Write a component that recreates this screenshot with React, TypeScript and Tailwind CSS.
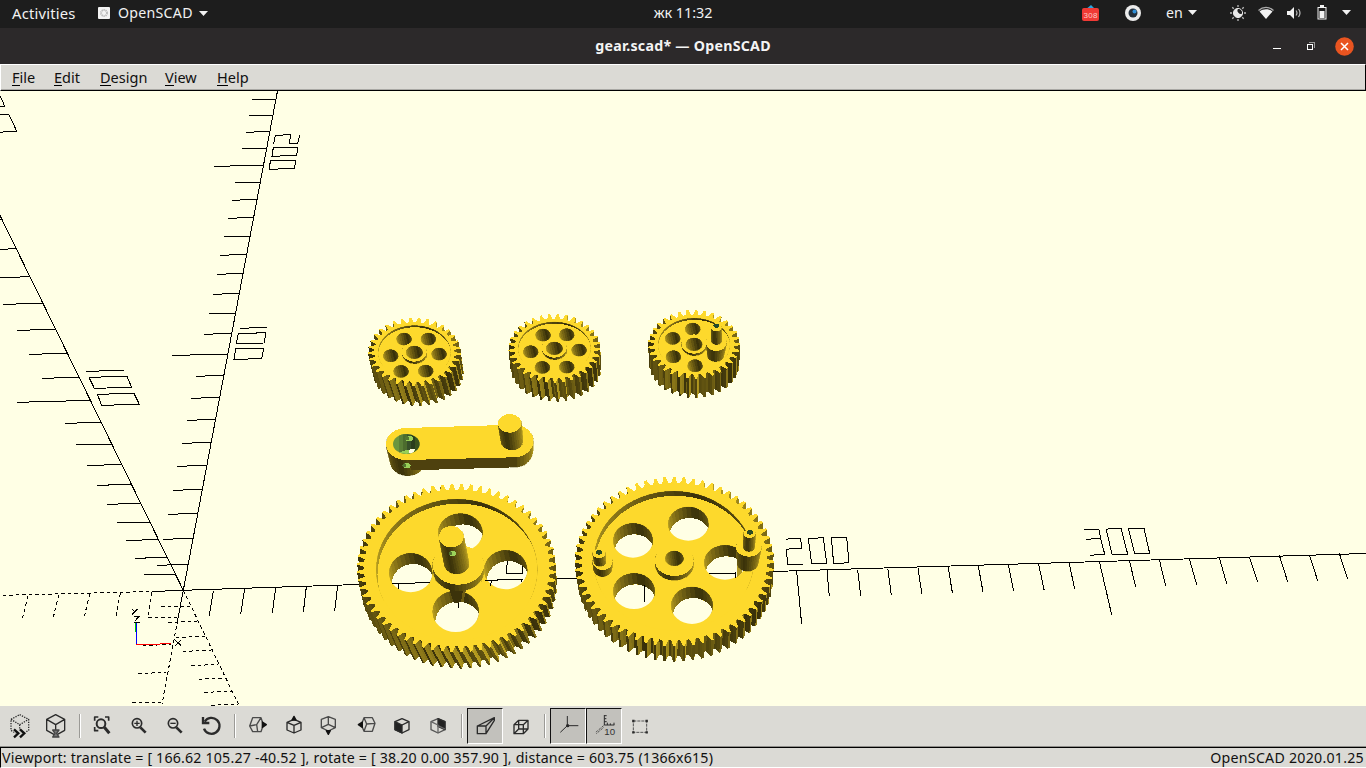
import type { ReactNode } from "react";

type P = [number, number];
type Ell = [number, number, number, number]; // cx, cy, rx, ry

const YELLOW = "#fdd92c";
const PAPER = "#ffffe5";
const TAU = Math.PI * 2;

/* ---------- shading and solids ---------- */

const DARK = (107.5 * Math.PI) / 180;
const brightness = (nx: number, ny: number) => {
  let d = Math.atan2(ny, nx) - DARK;
  while (d > Math.PI) d -= TAU;
  while (d < -Math.PI) d += TAU;
  return d < 0 ? Math.min(0.74, 0.22 + 0.28 * -d) : Math.min(0.6, 0.22 + 0.2 * d);
};

const shade = (b: number, c: P | number[] = [253, 217, 44]) =>
  `rgb(${Math.round(c[0] * b)},${Math.round(c[1] * b)},${Math.round(c[2] * b)})`;

const pts = (a: P[]) => a.map((p) => `${p[0].toFixed(2)},${p[1].toFixed(2)}`).join(" ");

/* converts values noted on a 3x grid with origin (ox, oy) */
const at = (ox: number, oy: number) => (e: Ell): Ell => [ox + e[0] / 3, oy + e[1] / 3, e[2] / 3, e[3] / 3];

const onEll = (e: Ell, a: number, r = 1): P => [e[0] + e[2] * r * Math.cos(a), e[1] + e[3] * r * Math.sin(a)];

function Wall({ top, bottom, n = 32, inside = false, tint }: { top: Ell; bottom: Ell; n?: number; inside?: boolean; tint?: number[] }) {
  const quads: { y: number; el: ReactNode }[] = [];
  for (let i = 0; i < n; i++) {
    const a = (i / n) * TAU;
    const b = ((i + 1) / n) * TAU;
    const m = (a + b) / 2;
    const s = inside ? -1 : 1;
    if (Math.sin(m) * s < -0.45) continue;
    const fill = shade(brightness(Math.cos(m) * s, Math.sin(m) * s), tint);
    quads.push({
      y: Math.sin(m) * s,
      el: (
        <polygon key={i} fill={fill} stroke={fill} strokeWidth=".3" points={pts([onEll(top, a), onEll(top, b), onEll(bottom, b), onEll(bottom, a)])} />
      ),
    });
  }
  quads.sort((p, q) => p.y - q.y);
  return <g>{quads.map((q) => q.el)}</g>;
}

const E = ({ e, fill }: { e: Ell; fill: string }) => <ellipse cx={e[0]} cy={e[1]} rx={e[2]} ry={e[3]} fill={fill} />;

function Cylinder({ top, bottom, n, cap = YELLOW }: { top: Ell; bottom: Ell; n?: number; cap?: string }) {
  return (
    <g>
      <Wall top={top} bottom={bottom} n={n} />
      <E e={top} fill={cap} />
    </g>
  );
}

/* Opening in a face; `floor` paints what is visible at the far end */
function Hole({ id, e, dx, dy, floor, tint, n = 30, taper = 0.98 }: { id: string; e: Ell; dx: number; dy: number; floor?: string; tint?: number[]; n?: number; taper?: number }) {
  const low: Ell = [e[0] + dx, e[1] + dy, e[2] * taper, e[3] * taper];
  return (
    <g>
      <clipPath id={id}>
        <ellipse cx={e[0]} cy={e[1]} rx={e[2]} ry={e[3]} />
      </clipPath>
      <g clipPath={`url(#${id})`}>
        <Wall top={e} bottom={low} inside n={n} tint={tint} />
        {floor && <E e={low} fill={floor} />}
      </g>
    </g>
  );
}

function GearBody({ top, bottom, teeth, root, twist, phase = 0 }: { top: Ell; bottom: Ell; teeth: number; root: number; twist: number; phase?: number }) {
  const prof: { a: number; r: number }[] = [];
  const step = TAU / teeth;
  for (let i = 0; i < teeth; i++) {
    const a = i * step + phase;
    prof.push({ a: a - step * 0.36, r: root });
    prof.push({ a: a - step * 0.22, r: root + (1 - root) * 0.45 });
    prof.push({ a: a - step * 0.12, r: 1 });
    prof.push({ a: a + step * 0.12, r: 1 });
    prof.push({ a: a + step * 0.22, r: root + (1 - root) * 0.45 });
    prof.push({ a: a + step * 0.36, r: root });
  }
  const quads = prof.map((p, i) => {
    const q = prof[(i + 1) % prof.length];
    const x1 = p.r * Math.cos(p.a);
    const y1 = p.r * Math.sin(p.a);
    const x2 = q.r * Math.cos(q.a);
    const y2 = q.r * Math.sin(q.a);
    const len = Math.hypot(x2 - x1, y2 - y1);
    const nx = (y2 - y1) / len;
    const ny = -(x2 - x1) / len;
    const fill = shade(brightness(nx, ny));
    return {
      y: (y1 + y2) / 2,
      el: (
        <polygon
          key={i}
          fill={fill}
          points={pts([onEll(top, p.a, p.r), onEll(top, q.a, q.r), onEll(bottom, q.a + twist, q.r), onEll(bottom, p.a + twist, p.r)])}
        />
      ),
    };
  });
  quads.sort((a, b) => a.y - b.y);
  return (
    <g>
      {quads.map((q) => q.el)}
      <polygon fill={YELLOW} points={pts(prof.map((p) => onEll(top, p.a, p.r)))} />
    </g>
  );
}

function SmallGear({ id, ox, oy, body, low, holes, hub, recess, phase, twist, hy = 13 }: { id: string; ox: number; oy: number; body: Ell; low: Ell; holes: P[]; hub: P; recess: Ell; phase: number; twist: number; hy?: number }) {
  const t = at(ox, oy);
  return (
    <g>
      <GearBody top={t(body)} bottom={t(low)} teeth={33} root={0.865} twist={twist} phase={phase} />
      <Hole id={id + "r"} e={t(recess)} dx={0.4} dy={2} floor={YELLOW} n={50} taper={1.005} />
      {holes.map((h, i) => (
        <Hole key={i} id={id + i} e={t([h[0], h[1], 23, 19])} dx={3} dy={hy} n={22} />
      ))}
      <Cylinder top={t([hub[0], hub[1] - 1, 37, 29])} bottom={t([hub[0] + 1, hub[1] + 5, 37, 29])} />
      <Hole id={id + "h"} e={t([hub[0], hub[1], 25, 20])} dx={3} dy={14} n={22} />
    </g>
  );
}

function Arm() {
  const t = at(350, 300);
  const L: Ell = t([168, 432, 60, 48]);
  const R: Ell = t([491, 423, 59, 49]);
  const outline: P[] = [];
  for (let i = 0; i <= 20; i++) outline.push(onEll(L, Math.PI / 2 + (i / 20) * Math.PI));
  for (let i = 0; i <= 20; i++) outline.push(onEll(R, -Math.PI / 2 + (i / 20) * Math.PI));
  return (
    <g>
      <Wall top={L} bottom={t([173, 488, 51, 39])} n={40} />
      <Wall top={R} bottom={t([492, 453, 57, 49])} n={36} />
      <polygon fill="#4e410e" points={pts([[408, 459], [516.5, 457], [516.5, 467.3], [411, 470.3]])} />
      <polygon fill={YELLOW} points={pts(outline)} />
      <clipPath id="armc">
        <ellipse cx={L[0] + 0.3} cy={L[1]} rx="13.300" ry="10" />
      </clipPath>
      <g clipPath="url(#armc)">
        <rect x="390" y="430" width="30" height="30" fill="#6b963f" />
        <rect x="399" y="430" width="4" height="30" fill="#5b8037" />
        <rect x="403" y="430" width="4" height="30" fill="#4c6c2e" />
        <rect x="407" y="430" width="4" height="30" fill="#37502a" />
        <rect x="411" y="430" width="4" height="30" fill="#2a3d1d" />
        <rect x="415" y="430" width="6" height="30" fill="#3a521f" />
        <path d="M399 453l4-2 6-1.500 6 .5-4 6H400z" fill="#98d058" />
        <path d="M408.500 451l2.500-2 4 0-1.500 3.500-3.500 1.500z" fill={PAPER} />
      </g>
      <E e={t([178, 416, 12, 8])} fill="#98d058" />
      <E e={t([171, 415, 6, 6])} fill="#54752f" />
      <E e={t([170, 497, 12, 8])} fill="#98d058" />
      <E e={t([163, 496, 6, 6])} fill="#54752f" />
      <Cylinder top={t([479, 370, 35, 28])} bottom={t([486, 423, 33, 27])} n={30} />
    </g>
  );
}

function WheelOne() {
  const t = at(350, 470);
  return (
    <g>
      <GearBody top={t([320, 294, 299, 253])} bottom={t([327, 348, 294, 248])} teeth={64} root={0.93} twist={-0.07} phase={0.05} />
      <Hole id="w1r" e={t([320, 299, 242, 212])} dx={1.8} dy={4.8} floor={YELLOW} n={60} taper={1.004} />
      {([[331, 187, 67, 57], [182, 308, 65, 59], [467, 299, 65, 59], [317, 424, 70, 62]] as Ell[]).map((h, i) => (
        <Hole key={i} id={"w1" + i} e={t(h)} dx={2.5} dy={10.700} floor={PAPER} />
      ))}
      <polygon fill="#3c330a" points={pts([[449, 588], [466, 588], [463.5, 602], [454, 603]])} />
      <polygon fill="#6d5c12" points={pts([[463, 590], [466, 590], [463.5, 602], [461, 602]])} />
      <Cylinder top={t([325, 285, 77, 59])} bottom={t([326, 304, 76, 59])} n={44} />
      <Cylinder top={t([304, 200, 37, 32])} bottom={t([320, 282, 37, 30])} n={34} />
      <E e={t([308, 251, 10, 8])} fill="#9bd25a" />
      <E e={t([301, 250, 5, 6])} fill="#54752f" />
    </g>
  );
}

function WheelTwo() {
  const t = at(565, 470);
  return (
    <g>
      <GearBody top={t([328, 275, 299, 254])} bottom={t([331, 327, 293, 248])} teeth={64} root={0.93} twist={0.012} />
      <Hole id="w2r" e={t([326, 272, 240, 209])} dx={1.2} dy={5} floor={YELLOW} n={60} taper={1.004} />
      {([[370, 161, 61, 51], [204, 211, 60, 52], [480, 277, 63, 52], [207, 363, 63, 54], [381, 406, 63, 56]] as Ell[]).map((h, i) => (
        <Hole key={i} id={"w2" + i} e={t(h)} dx={1.3} dy={11} floor={PAPER} />
      ))}
      <Cylinder top={t([328, 273, 58, 45])} bottom={t([328, 286, 57, 45])} n={40} />
      <Hole id="w2h" e={t([328, 265, 28, 23])} dx={2} dy={15} />
      <Cylinder top={t([113, 275, 30, 25])} bottom={t([113, 295, 28, 25])} />
      <Cylinder top={t([102, 250, 19, 14])} bottom={t([105, 276, 18, 13])} n={20} />
      <E e={t([102, 247, 9, 7])} fill="#2c4a24" />
      <polygon fill="#b39a23" points={pts([[736.5, 552], [742, 556], [742, 572], [737, 577.5]])} />
      <Cylinder top={t([551, 233, 38, 27])} bottom={t([548, 280, 31, 24])} n={34} />
      <Cylinder top={t([554, 191, 18, 13])} bottom={t([552, 232, 17, 13])} n={20} />
      <E e={t([555, 187, 9, 7])} fill="#2c4a24" />
    </g>
  );
}

/* ---------- axes ---------- */

type Seg = [number, number, number, number];
const path = (ox: number, oy: number, segs: Seg[]) =>
  segs.map(([a, b, c, d]) => `M${ox + a / 3} ${oy + b / 3}L${ox + c / 3} ${oy + d / 3}`).join("");
const poly = (ox: number, oy: number, p: P[], close = false) =>
  "M" + p.map(([x, y]) => `${ox + x / 3} ${oy + y / 3}`).join("L") + (close ? "Z" : "");

const midTicks: Seg[] = [1, 2, 3, 4, 5, 6].map((k) => [2573 + 90.4 * k, 1708.5 - 3 * k, 2582 + 91.7 * k, 1787 - 3 * k]);

const solid =
  "M152 591.5L183 590.3L358 584.5L575 578.5L773 571.5L867 568.5L1068 562.5L1366 553.5M183.300 590.300L277.500 91M183.300 590.300L0 215.500M183.300 590.300L177.700 620" +
  path(0, 0, [[829, 298, 757, 298], [820, 346, 747, 346], [810, 394, 739, 397], [800, 445, 727, 445], [790, 496, 643, 499], [781, 547, 706, 547], [771, 598, 697, 601], [760, 652, 685, 655], [750, 709, 673, 709]]) +
  path(0, 180, [[739, 223, 661, 226], [730, 280, 652, 283], [718, 340, 640, 343], [706, 400, 628, 400], [694, 460, 613, 463], [683, 523, 517, 526], [671, 586, 589, 589], [658, 652, 574, 655], [646, 718, 562, 721], [6, 118, 0, 118], [48, 206, 0, 208], [91, 290, 0, 293], [130, 370, 10, 373], [167, 448, 52, 451], [203, 520, 88, 523], [237, 592, 127, 595], [272, 661, 52, 667], [303, 727, 196, 730]]) +
  path(60, 415, [[152, 88, 48, 88], [184, 149, 82, 151], [214, 208, 112, 211], [242, 265, 142, 268], [270, 322, 172, 322], [295, 374, 198, 376], [321, 427, 225, 430], [345, 478, 253, 478], [454, 82, 367, 85], [440, 151, 352, 154], [427, 223, 340, 226], [413, 295, 325, 298], [398, 370, 310, 373], [383, 448, 292, 451]]) +
  path(0, 560, [[640, 92, 628, 167], [734, 86, 722, 163], [827, 83, 817, 160], [919, 80, 910, 157], [1013, 77, 1004, 154]]) +
  path(565, 470, [[695, 304, 710, 463], [786, 301, 793, 379], [878, 299, 887, 377]]) +
  path(0, 0, midTicks) +
  path(1050, 510, [[57, 158, 74, 236], [148, 154, 185, 314], [238, 151, 257, 230], [328, 149, 347, 227], [418, 147, 440, 224], [508, 143, 530, 221], [598, 140, 623, 217], [688, 136, 713, 215], [778, 134, 803, 212], [868, 130, 893, 208]]);

const figures =
  poly(0, 0, [[0, 287], [8, 303], [14, 319], [0, 319]]) +
  poly(0, 0, [[0, 343], [27, 344], [50, 393], [20, 394], [0, 398]]) +
  poly(0, 0, [[821, 432], [826, 406], [872, 404], [868, 430], [893, 431], [899, 405]]) +
  poly(0, 0, [[820, 442], [893, 443], [890, 466], [816, 469]], true) +
  poly(0, 0, [[811, 482], [887, 480], [884, 505], [808, 508]], true) +
  poly(0, 180, [[720, 445], [800, 442]]) +
  poly(0, 180, [[715, 461], [797, 458], [793, 489], [709, 490]], true) +
  poly(0, 180, [[707, 506], [791, 505], [785, 536], [702, 538]], true) +
  poly(0, 180, [[259, 574], [371, 571]]) +
  poly(0, 180, [[267, 592], [381, 589], [395, 622], [283, 625]], true) +
  poly(0, 180, [[292, 643], [402, 640], [418, 673], [305, 676]], true) +
  poly(565, 470, [[664, 208], [680, 205], [707, 206], [710, 235], [690, 235], [664, 238], [668, 283], [713, 283]]) +
  poly(565, 470, [[730, 206], [775, 203], [785, 280], [740, 281]], true) +
  poly(565, 470, [[799, 203], [845, 203], [852, 278], [806, 281]], true) +
  poly(1050, 510, [[103, 58], [147, 59], [152, 85], [109, 88]]) +
  poly(1050, 510, [[152, 85], [164, 132], [120, 136]]) +
  poly(1050, 510, [[169, 59], [181, 55], [213, 55], [233, 132], [186, 133]], true) +
  poly(1050, 510, [[235, 55], [282, 55], [299, 130], [254, 130]], true);

const dashed =
  "M3 595.300L152 591.500M177.700 620L162 704" +
  path(0, 560, [[550, 91, 715, 432], [84, 108, 67, 176], [176, 105, 160, 172], [269, 102, 253, 170], [361, 100, 348, 167], [455, 97, 443, 172], [445, 173, 530, 173], [428, 257, 512, 253], [415, 340, 497, 338], [397, 427, 484, 427], [484, 139, 570, 139], [505, 187, 590, 184], [528, 232, 615, 229], [549, 274, 634, 271], [574, 317, 655, 313], [596, 358, 675, 354], [613, 397, 695, 394], [634, 436, 715, 432]]);

const throughHoles =
  path(350, 470, [[126, 342, 240, 337], [145, 341, 145, 358], [405, 331, 520, 328], [425, 331, 421, 347], [516, 328, 515, 335], [327, 398, 325, 413]]) +
  poly(350, 470, [[472, 274], [469, 310], [517, 310], [517, 287]]) +
  path(565, 470, [[432, 310, 511, 310], [511, 306, 512, 323], [238, 345, 238, 395]]);

function Scene() {
  return (
    <svg className="block h-[615px] w-full bg-[#ffffe5]" viewBox="0 91 1366 615" shapeRendering="crispEdges">
      <g fill="none" stroke="#000">
        <path d={solid + figures} />
        <path d={dashed} strokeDasharray="3.500 3" />
        <path d="M135.500 623V632" stroke="#00c800" />
        <path d="M136.500 622V644.500" stroke="#0000ff" />
        <path d="M136.500 644.500L154 644.300L171 643.400" stroke="#ff0000" />
        <path d="M132 609L135 612M137.500 609L132 614.500M134 616.500H139.500M138.500 617L134.500 621.500M134 622.500H139.500M175.300 640.300L181 645.500M181 640.300L175.300 645.500" />
      </g>
      <SmallGear id="ga" ox={350} oy={300} body={[193, 156, 139, 103]} low={[205, 219, 136, 99]} hub={[193, 157]} holes={[[162, 117], [235, 117], [122, 167], [267, 162], [153, 214], [227, 213]]} recess={[193, 156, 109, 80]} phase={0.06} twist={-0.06} />
      <SmallGear id="gb" ox={350} oy={300} body={[613, 145, 138, 103]} low={[618, 206, 136, 99]} hub={[613, 145]} holes={[[579, 105], [650, 104], [542, 155], [687, 150], [577, 202], [650, 201]]} recess={[613, 144, 109, 79]} phase={0.03} twist={-0.025} />
      <SmallGear id="gc" ox={600} oy={300} body={[282, 133, 138, 103]} low={[283, 195, 135, 99]} hub={[282, 133]} holes={[[278, 87], [218, 115], [220, 170], [285, 197]]} recess={[282, 133, 108, 79]} phase={0.0} twist={0} />
      <Cylinder top={at(600, 300)([349, 128, 31, 25])} bottom={at(600, 300)([347, 168, 24, 17])} n={26} />
      <Cylinder top={at(600, 300)([349, 82, 16, 12])} bottom={at(600, 300)([350, 122, 16, 12])} n={20} />
      <E e={at(600, 300)([349, 77, 9, 6])} fill="#23492a" />
      <Arm />
      <WheelOne />
      <WheelTwo />
      <path d={throughHoles} fill="none" stroke="#000" />
    </svg>
  );
}

/* ---------- toolbar ---------- */

function Tool({ x, label, pressed, children }: { x: number; label: string; pressed?: boolean; children: ReactNode }) {
  return (
    <button
      aria-label={label}
      className={
        "h-9 w-9 shrink-0 " +
        (pressed ? "border border-t-[#111] border-l-[#111] border-r-white border-b-white bg-[#c2c1bc]" : "border border-transparent")
      }
    >
      <svg className="-m-px block h-9 w-9 max-w-none" viewBox={`${x * 3} 9 108 108`} fill="none" stroke="#2b2b2b" strokeWidth="4" strokeLinejoin="round">
        {children}
      </svg>
    </button>
  );
}

const Sep = ({ className }: { className: string }) => (
  <div className={"flex h-6 shrink-0 " + className}>
    <i className="h-6 w-px bg-[#9b9a96]" />
    <i className="h-6 w-px bg-white" />
  </div>
);

function Toolbar() {
  return (
    <div className="flex h-10 shrink-0 items-center bg-[#dbdad5] pl-0.5">
      <Tool x={2} label="Preview">
        <path d="M59 29L86 43V76L59 91L33 76V43ZM33 43L59 59L86 43M59 59V91" strokeDasharray="4 3.500" />
        <path d="M42 73L56 85L42 97M60 73L74 85L60 97" stroke="#dbdad5" strokeWidth="12" />
        <path d="M42 73L55 85L42 97M60 73L73 85L60 97" stroke="#111" strokeWidth="7" strokeLinejoin="miter" />
      </Tool>
      <Tool x={38} label="Render">
        <path d="M167 29L194 43V76L167 91L140 76V43ZM140 43L167 59L194 43M167 59V75" />
        <path d="M158 75H177L170 85L177 96H158L165 85Z" fill="#777" stroke="#444" strokeWidth="4" />
      </Tool>
      <Sep className="w-2.5 pl-[5px]" />
      <Tool x={84} label="View all">
        <path d="M284 47V36H295M315 36H326V47M284 66V77H295" strokeWidth="5" />
        <circle cx="303" cy="56" r="13" strokeWidth="6" />
        <path d="M313 67L328 85" strokeWidth="9" />
      </Tool>
      <Tool x={120} label="Zoom in">
        <circle cx="411" cy="55" r="14" strokeWidth="5" />
        <path d="M403 55H419M411 47V63" strokeWidth="4" />
        <path d="M421 67L437 83" strokeWidth="8" />
      </Tool>
      <Tool x={156} label="Zoom out">
        <circle cx="519" cy="55" r="14" strokeWidth="5" />
        <path d="M511 55H527" strokeWidth="4" />
        <path d="M529 67L545 83" strokeWidth="8" />
      </Tool>
      <Tool x={192} label="Reset view">
        <path d="M614 50A24 24 0 1 1 612 71" strokeWidth="7" />
        <path d="M609 36V54H628" strokeWidth="7" strokeLinejoin="miter" />
      </Tool>
      <Sep className="w-[11px] pl-1.5" />
      <Tool x={239} label="Right">
        <path d="M758 38H783L790 59L783 80H758L749 63ZM749 63L770 59L783 38M770 59L773 80" stroke="#4a4a4a" />
        <path d="M787 51L799 59L787 67Z" fill="#111" stroke="#111" />
      </Tool>
      <Tool x={275} label="Top">
        <path d="M882 43L903 52V75L882 84L861 75V52ZM861 52L882 61L903 52M882 61V84" />
        <path d="M882 34L888 45H876Z" fill="#111" stroke="#111" />
      </Tool>
      <Tool x={311} label="Bottom">
        <path d="M985 35L1006 43V68L985 78L964 68V43ZM985 35V58L964 68M985 58L1006 68" stroke="#4a4a4a" />
        <path d="M985 88L991 77H979Z" fill="#111" stroke="#111" />
      </Tool>
      <Tool x={347} label="Left">
        <path d="M1092 38H1117L1125 55L1117 79H1092L1084 59ZM1092 38L1100 57L1125 55M1100 57L1092 79" stroke="#4a4a4a" />
        <path d="M1087 51L1075 59L1087 67Z" fill="#111" stroke="#111" />
      </Tool>
      <Tool x={383} label="Front">
        <path d="M1206 41L1227 50V74L1206 84L1185 74V50Z" fill="#dbdad5" />
        <path d="M1185 50L1206 60V84L1185 74Z" fill="#222" />
        <path d="M1206 60L1227 50" />
      </Tool>
      <Tool x={419} label="Back">
        <path d="M1314 41L1335 50V74L1314 84L1293 74V50Z" fill="#dbdad5" stroke="#555" />
        <path d="M1314 41L1335 50V74L1314 64Z" fill="#222" />
        <path d="M1293 50L1314 60V84M1314 62L1335 72" stroke="#666" />
      </Tool>
      <Sep className="w-3 pl-[6px]" />
      <Tool x={467} label="Perspective" pressed>
        <path d="M1432 63H1458V86H1432ZM1432 63L1483 38V46L1458 86M1458 63L1483 38" strokeWidth="4" />
      </Tool>
      <Tool x={503} label="Orthogonal">
        <path d="M1542 59H1570V86H1542ZM1556 46H1584V72H1556ZM1542 59L1556 46M1570 59L1584 46M1542 86L1556 72M1570 86L1584 72" strokeWidth="4" />
      </Tool>
      <Sep className="w-[11px] pl-[5px]" />
      <Tool x={550} label="Show axes" pressed>
        <path d="M1702 33V62L1735 62M1702 62L1681 82" strokeWidth="3" />
        <circle cx="1703" cy="62" r="3" fill="#222" />
      </Tool>
      <Tool x={586} label="Show scale markers" pressed>
        <path d="M1813 30V60H1843M1813 32H1820M1813 41H1819M1813 50H1820M1822 60V53M1831 60V55M1842 60V53" strokeWidth="3" />
        <path d="M1813 60L1787 82M1810 68L1789 86" strokeWidth="3" strokeDasharray="3 3" />
        <text x="1813" y="89" fontSize="29" fontFamily="Liberation Sans" fill="#333" stroke="none">10</text>
      </Tool>
      <Tool x={622} label="Show edges">
        <path d="M1900 48H1940V82H1900Z" strokeWidth="3" stroke="#555" strokeDasharray="9 3" />
        <path d="M1900 48h.1M1940 48h.1M1900 82h.1M1940 82h.1" strokeWidth="7" strokeLinecap="square" />
      </Tool>
    </div>
  );
}

/* ---------- chrome ---------- */

const Caret = ({ className }: { className: string }) => (
  <svg className={"h-[5px] w-[9px] shrink-0 " + className} viewBox="0 0 9 5" fill="#f2f2f2">
    <path d="M0 0H9L4.500 5Z" />
  </svg>
);

function TopBar() {
  return (
    <div className="grid h-7 shrink-0 grid-cols-[1fr_auto_1fr] items-center bg-[#1d1d1d] pb-[2px] text-[14.200px] text-[#f2f2f2]">
      <div className="flex items-center pl-3">
        <span className="w-[86px] text-[14.800px] tracking-[0.2px]">Activities</span>
        <svg className="h-3 w-3" viewBox="0 0 12 12">
          <rect width="12" height="12" rx="1" fill="#f4f4f4" />
          <circle cx="6" cy="6" r="3" fill="none" stroke="#bdbdbd" strokeWidth="2" strokeDasharray="1.300 .6" />
        </svg>
        <span className="ml-[8px] w-[75px] tracking-[0.25px]">OpenSCAD</span>
        <Caret className="ml-[6px]" />
      </div>
      <span className="text-[14.400px] tracking-[-0.05px]">жк 11:32</span>
      <div className="flex items-center justify-end pr-[15px]">
        <svg className="h-4 w-[17px]" viewBox="0 0 17 16">
          <path d="M3 5L9 0L14 5Z" fill="#2aa5e0" />
          <rect y="3" width="17" height="13" rx="2" fill="#f03a35" />
          <text x="8.500" y="13" fontSize="8" textAnchor="middle" textLength="14" fontFamily="Liberation Sans" fill="#ffc9c4">308</text>
        </svg>
        <svg className="ml-[26px] h-4 w-4" viewBox="0 0 16 16">
          <circle cx="8" cy="8" r="8" fill="#ececec" />
          <circle cx="8" cy="8" r="4.500" fill="#24303c" />
          <circle cx="9.500" cy="6.500" r="2" fill="#2f8fd8" />
        </svg>
        <span className="ml-[25px] w-[17px]">en</span>
        <Caret className="ml-[5px]" />
        <svg className="ml-[33px] h-4 w-4" viewBox="0 0 16 16">
          <path d="M8 3.500a4.500 4.500 0 1 0 4.500 5A3.500 3.500 0 0 1 8 3.500Z" fill="#e8e8e8" />
          <circle cx="8" cy="8" r="4.600" fill="none" stroke="#e8e8e8" strokeWidth="1" />
          <path d="M8 0v2M8 14v2M0 8h2M14 8h2M2.300 2.300l1.400 1.400M12.300 12.300l1.400 1.400M13.700 2.300l-1.400 1.400M3.700 12.300l-1.400 1.400" stroke="#bbb" strokeWidth="1.300" />
        </svg>
        <svg className="ml-3 h-3.5 w-4" viewBox="0 0 16 14">
          <path d="M.5 4.500C5 .3 11 .3 15.500 4.500" fill="none" stroke="#aaa" strokeWidth="1.300" />
          <path d="M1.500 5.500C5 2.500 11 2.500 14.500 5.500L8 13Z" fill="#f2f2f2" />
        </svg>
        <svg className="ml-[13px] h-3 w-[15px]" viewBox="0 0 15 12">
          <path d="M0 4H3L7 0V12L3 8H0Z" fill="#f2f2f2" />
          <path d="M9 3.500Q11 6 9 8.500M11.500 2Q14.500 6 11.500 10" fill="none" stroke="#bbb" strokeWidth="1.200" />
        </svg>
        <svg className="ml-[15px] h-[15px] w-2.5" viewBox="0 0 10 15">
          <path d="M3 0H7V2H9.500V14.500H.5V2H3Z" fill="#f2f2f2" />
          <rect x="1.500" y="3" width="7" height="10.500" fill="#1d1d1d" />
          <rect x="2.500" y="6" width="5" height="7" fill="#f2f2f2" />
        </svg>
        <Caret className="ml-[15px]" />
      </div>
    </div>
  );
}

function TitleBar() {
  return (
    <div className="grid h-9 shrink-0 grid-cols-[1fr_auto_1fr] items-center bg-[#2c292a]">
      <span />
      <span className="text-[14.200px] font-bold tracking-[0.26px] text-[#f4f4f4]">gear.scad* — OpenSCAD</span>
      <div className="flex items-center justify-end pr-[12px]">
        <i className="mt-[5px] mr-[26px] h-px w-2 bg-white" />
        <svg className="mr-5 h-2 w-2 overflow-visible" viewBox="0 0 8 8" fill="none" shapeRendering="crispEdges">
          <path d="M2 .5H7.500V6" stroke="#999" />
          <rect x=".5" y="2.500" width="5" height="5" stroke="#fff" />
        </svg>
        <svg className="h-[19px] w-[19px]" viewBox="0 0 19 19">
          <circle cx="9.500" cy="9.500" r="9.300" fill="#e95420" />
          <path d="M6 6L13 13M13 6L6 13" stroke="#fff" strokeWidth="1.500" />
        </svg>
      </div>
    </div>
  );
}

const menus: [string, string, string][] = [
  ["F", "ile", "w-[42px]"],
  ["E", "dit", "w-[46px]"],
  ["D", "esign", "w-[65px]"],
  ["V", "iew", "w-[52px]"],
  ["H", "elp", "w-[40px]"],
];

export default function App() {
  return (
    <div className="flex h-[768px] w-[1366px] flex-col overflow-hidden bg-[#dbdad5] font-['Noto_Sans','Open_Sans',sans-serif] text-[14.200px] whitespace-nowrap text-[#101010]">
      <TopBar />
      <TitleBar />
      <div className="flex h-[27px] shrink-0 items-center border-t border-r border-b border-l border-t-white border-r-black border-b-black border-l-white bg-[#dbdad5] pl-[11px] shadow-[inset_0_-1px_0_#a9a8a4]">
        {menus.map(([k, rest, w]) => (
          <span key={k} className={w + " text-[14.500px]"}>
            <span className="inline-block h-[18px] border-b border-black leading-[18px]">{k}</span>
            {rest}
          </span>
        ))}
      </div>
      <Scene />
      <Toolbar />
      <div className="h-px shrink-0 bg-[#8f8e8a]" />
      <div className="flex h-[21px] shrink-0 items-center justify-between border-t border-b border-l border-t-black border-b-white border-l-black pr-0.5 pl-px">
        <span className="tracking-[0.187px]">Viewport: translate = [ 166.62 105.27 -40.52 ], rotate = [ 38.20 0.00 357.90 ], distance = 603.75 (1366x615)</span>
        <span className="tracking-[0.25px]">OpenSCAD 2020.01.25</span>
      </div>
    </div>
  );
}
